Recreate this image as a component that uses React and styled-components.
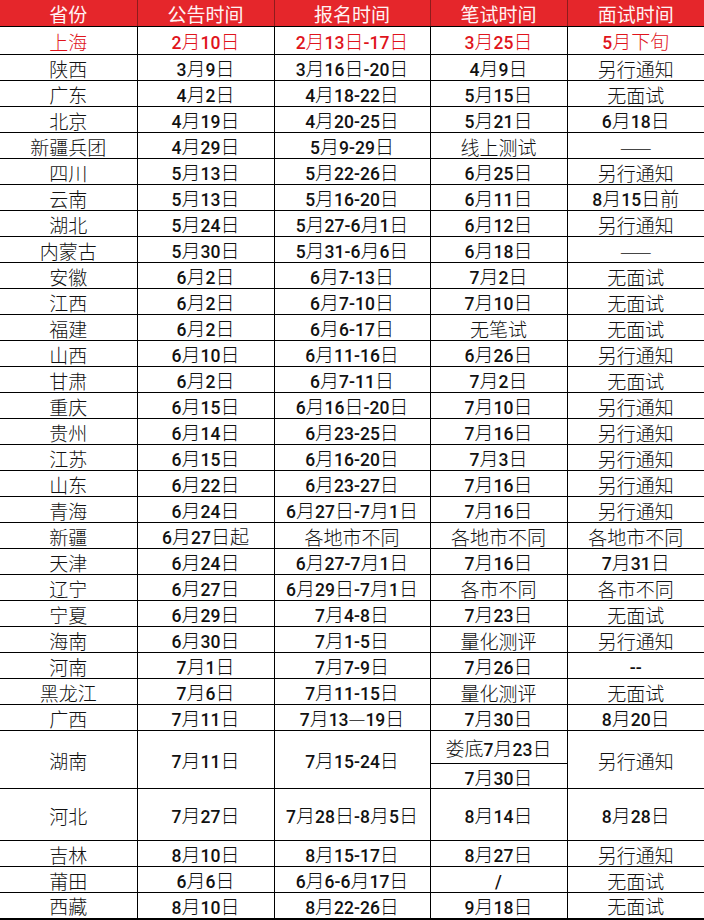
import React from 'react';
import styled, { createGlobalStyle } from 'styled-components';

const GlobalStyle = createGlobalStyle`
  html, body {
    margin: 0;
    padding: 0;
    background: #fff;
  }
`;

const Sheet = styled.table`
  width: 704px;
  table-layout: fixed;
  border-collapse: collapse;
  border-bottom: 2px solid #000;
  font-family: "Noto Sans CJK SC", sans-serif;
`;

const HeadCell = styled.th`
  height: 25px;
  padding: 1px 0 0;
  background: #e5262b;
  color: #fff3f3;
  font-size: 19px;
  font-weight: 400;
  line-height: 20px;
  text-align: center;
  border-left: 1px solid #8e1c1c;
  border-bottom: 1px solid #000;
  &:first-child {
    border-left: none;
  }
`;

const Row = styled.tr`
  height: ${(p) => p.$h || 26}px;
`;

const Cell = styled.td`
  padding: 3px 0 0;
  text-align: center;
  vertical-align: middle;
  line-height: 18px;
  white-space: nowrap;
  color: ${(p) => (p.$red ? '#e0141c' : '#111')};
  border: 1px solid #000;
  &:first-child {
    border-left: none;
  }
  &:last-child {
    border-right: none;
  }
`;

const Han = styled.span`
  font-family: "Noto Sans CJK SC", sans-serif;
  font-size: 19px;
  font-weight: 300;
  line-height: 18px;
`;

const Num = styled.span`
  font-family: Roboto, "Noto Sans", sans-serif;
  font-size: 17.5px;
  font-weight: 500;
  line-height: 18px;
`;

const Mixed = ({ text }) =>
  text
    .split(/([\u4e00-\u9fff\u2014]+)/)
    .filter(Boolean)
    .map((part, i) =>
      /[\u4e00-\u9fff\u2014]/.test(part) ? <Han key={i}>{part}</Han> : <Num key={i}>{part}</Num>
    );

const heads = ['省份', '公告时间', '报名时间', '笔试时间', '面试时间'];

const before = [
  ['陕西', '3月9日', '3月16日-20日', '4月9日', '另行通知'],
  ['广东', '4月2日', '4月18-22日', '5月15日', '无面试'],
  ['北京', '4月19日', '4月20-25日', '5月21日', '6月18日'],
  ['新疆兵团', '4月29日', '5月9-29日', '线上测试', '——'],
  ['四川', '5月13日', '5月22-26日', '6月25日', '另行通知'],
  ['云南', '5月13日', '5月16-20日', '6月11日', '8月15日前'],
  ['湖北', '5月24日', '5月27-6月1日', '6月12日', '另行通知'],
  ['内蒙古', '5月30日', '5月31-6月6日', '6月18日', '——'],
  ['安徽', '6月2日', '6月7-13日', '7月2日', '无面试'],
  ['江西', '6月2日', '6月7-10日', '7月10日', '无面试'],
  ['福建', '6月2日', '6月6-17日', '无笔试', '无面试'],
  ['山西', '6月10日', '6月11-16日', '6月26日', '另行通知'],
  ['甘肃', '6月2日', '6月7-11日', '7月2日', '无面试'],
  ['重庆', '6月15日', '6月16日-20日', '7月10日', '另行通知'],
  ['贵州', '6月14日', '6月23-25日', '7月16日', '另行通知'],
  ['江苏', '6月15日', '6月16-20日', '7月3日', '另行通知'],
  ['山东', '6月22日', '6月23-27日', '7月16日', '另行通知'],
  ['青海', '6月24日', '6月27日-7月1日', '7月16日', '另行通知'],
  ['新疆', '6月27日起', '各地市不同', '各地市不同', '各地市不同'],
  ['天津', '6月24日', '6月27-7月1日', '7月16日', '7月31日'],
  ['辽宁', '6月27日', '6月29日-7月1日', '各市不同', '各市不同'],
  ['宁夏', '6月29日', '7月4-8日', '7月23日', '无面试'],
  ['海南', '6月30日', '7月1-5日', '量化测评', '另行通知'],
  ['河南', '7月1日', '7月7-9日', '7月26日', '--'],
  ['黑龙江', '7月6日', '7月11-15日', '量化测评', '无面试'],
  ['广西', '7月11日', '7月13—19日', '7月30日', '8月20日'],
];

const after = [
  ['河北', '7月27日', '7月28日-8月5日', '8月14日', '8月28日', 52],
  ['吉林', '8月10日', '8月15-17日', '8月27日', '另行通知'],
  ['莆田', '6月6日', '6月6-6月17日', '/', '无面试'],
  ['西藏', '8月10日', '8月22-26日', '9月18日', '无面试'],
];

const Line = ({ cells, h, red }) => (
  <Row $h={h}>
    {cells.map((c, i) => (
      <Cell key={i} $red={red}>
        <Mixed text={c} />
      </Cell>
    ))}
  </Row>
);

export default function App() {
  return (
    <>
      <GlobalStyle />
      <Sheet>
        <colgroup>
          <col style={{ width: 137 }} />
          <col style={{ width: 137 }} />
          <col style={{ width: 156 }} />
          <col style={{ width: 137 }} />
          <col style={{ width: 137 }} />
        </colgroup>
        <thead>
          <tr>
            {heads.map((h) => (
              <HeadCell key={h}>{h}</HeadCell>
            ))}
          </tr>
        </thead>
        <tbody>
          <Line red h={28} cells={['上海', '2月10日', '2月13日-17日', '3月25日', '5月下旬']} />
          {before.map((r) => (
            <Line key={r[0]} cells={r.slice(0, 5)} />
          ))}
          <Row $h={33}>
            <Cell rowSpan={2}><Mixed text="湖南" /></Cell>
            <Cell rowSpan={2}><Mixed text="7月11日" /></Cell>
            <Cell rowSpan={2}><Mixed text="7月15-24日" /></Cell>
            <Cell><Mixed text="娄底7月23日" /></Cell>
            <Cell rowSpan={2}><Mixed text="另行通知" /></Cell>
          </Row>
          <Row $h={25}>
            <Cell><Mixed text="7月30日" /></Cell>
          </Row>
          {after.map((r) => (
            <Line key={r[0]} cells={r.slice(0, 5)} h={r[5]} />
          ))}
        </tbody>
      </Sheet>
    </>
  );
}
